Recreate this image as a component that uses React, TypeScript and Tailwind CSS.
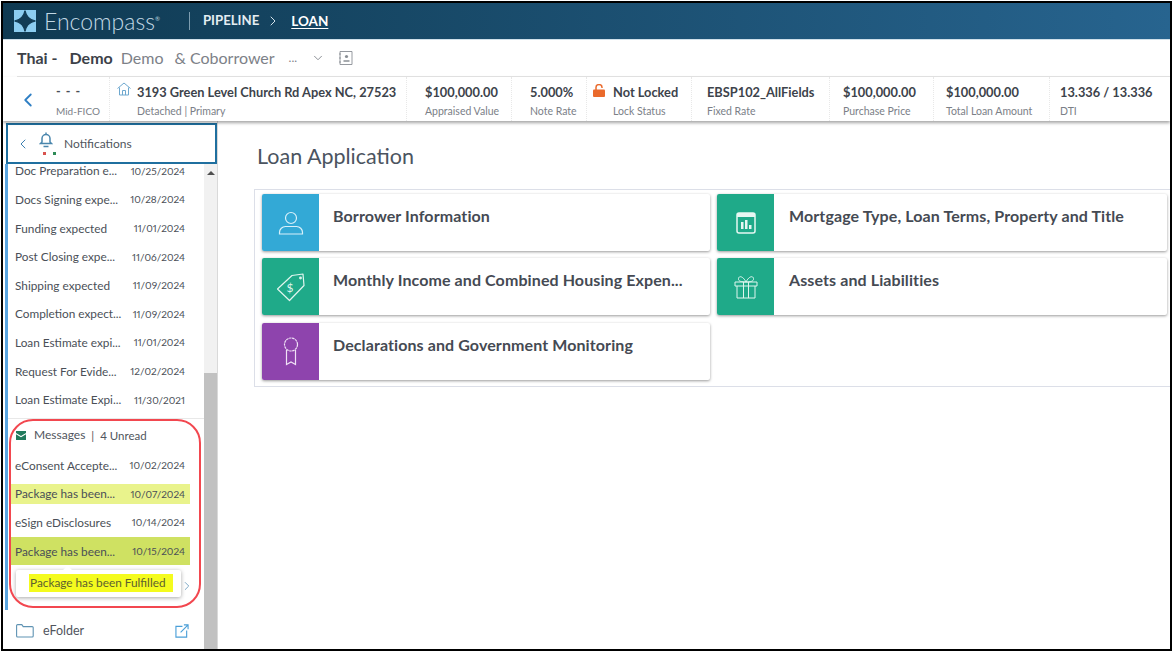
import { ChevronDown, ChevronLeft, ChevronRight } from "lucide-react";
import type { ReactNode } from "react";

const milestones = [
  { label: "Doc Preparation e...", date: "10/25/2024" },
  { label: "Docs Signing expe...", date: "10/28/2024" },
  { label: "Funding expected", date: "11/01/2024" },
  { label: "Post Closing expe...", date: "11/06/2024" },
  { label: "Shipping expected", date: "11/09/2024" },
  { label: "Completion expect...", date: "11/09/2024" },
  { label: "Loan Estimate expi...", date: "11/01/2024" },
  { label: "Request For Evide...", date: "12/02/2024" },
  { label: "Loan Estimate Expi...", date: "11/30/2021" },
];

const messages = [
  { label: "eConsent Accepte...", date: "10/02/2024", hl: "h-[28px]" },
  { label: "Package has been...", date: "10/07/2024", hl: "h-[20px] bg-[#e9f38c]" },
  { label: "eSign eDisclosures", date: "10/14/2024", hl: "h-[28px]" },
  { label: "Package has been...", date: "10/15/2024", hl: "h-[28px] bg-[#cfe162]" },
];

function Row({ label, date, hl = "h-[28px]" }: { label: string; date: string; hl?: string }) {
  return (
    <div className="h-[28.6px] flex items-center ml-[3px] w-[179px]">
      <div className={`${hl} w-full flex items-center justify-between pl-[4px] pr-[5px] text-[11.8px] text-[#4a4f57] whitespace-nowrap`}>
        <span>{label}</span>
        <span className="text-[10px] proportional-nums">{date}</span>
      </div>
    </div>
  );
}

function Stat({ width, pad, value, label, icon }: { width: string; pad: string; value: string; label: string; icon?: ReactNode }) {
  return (
    <div className={`${width} ${pad} h-full shrink-0 flex border-r border-dotted border-[#e8e8e8]`}>
      {icon}
      <div className="whitespace-nowrap">
        <div className="text-[12.8px] font-bold text-[#3d434b] leading-[16px] mt-[7px]">{value}</div>
        <div className="text-[10.5px] text-[#7b8087] leading-[14px] mt-[4px]">{label}</div>
      </div>
    </div>
  );
}

function Card({ color, title, icon, pad = "pl-[14px]" }: { color: string; title: string; icon: ReactNode; pad?: string }) {
  return (
    <div className="h-[57px] flex bg-white rounded-[2px] shadow-[0_1px_3px_rgba(0,0,0,0.4)] overflow-hidden">
      <div className={`${color} w-[57px] shrink-0 flex items-center justify-center`}>{icon}</div>
      <div className={`${pad} pt-[13px] text-[16px] tracking-[0.1px] font-bold leading-[18px] text-[#454a53] whitespace-nowrap`}>{title}</div>
    </div>
  );
}

export default function App() {
  return (
    <div className="w-[1175px] h-[654px] bg-white p-px font-['Lato','Liberation_Sans',sans-serif] overflow-hidden">
      <div className="w-[1171px] h-[650px] border-2 border-black flex flex-col overflow-hidden">
        {/* top bar */}
        <div className="h-[37px] shrink-0 flex items-center bg-gradient-to-r from-[#0f3a52] to-[#27648f] pl-[11px] border-b border-[#cfe0ea]">
          <svg width="22" height="22" viewBox="0 0 22 22">
            <rect width="22" height="22" fill="#8ccdf0" />
            <path d="M11 0.5 C12 6 16 10 21.5 11 C16 12 12 16 11 21.5 C10 16 6 12 0.5 11 C6 10 10 6 11 0.5Z" fill="#123c55" stroke="#123c55" strokeWidth="1.2" />
          </svg>
          <span className="ml-[8px] text-[23px] font-light text-[#c2d8e4] leading-none">Encompass</span>
          <span className="text-[6px] text-[#b9d2df] self-start mt-[11px]">®</span>
          <div className="ml-[29px] w-px h-[18px] bg-[#7d9db0]" />
          <span className="ml-[13px] text-[13.2px] font-bold text-[#e4edf2]">PIPELINE</span>
          <ChevronRight className="ml-[6px] w-[16px] h-[16px] text-[#d4e2ea]" strokeWidth={1.5} />
          <span className="ml-[10px] text-[13.5px] font-bold text-white underline underline-offset-2">LOAN</span>
        </div>

        {/* borrower name */}
        <div className="h-[37px] shrink-0 ml-[14px] flex items-center border-b border-[#e4e4e4] text-[16px] whitespace-nowrap">
          <span className="font-bold text-[#3c4148]">Thai -</span>
          <span className="ml-[12px] font-bold text-[#3c4148]">Demo</span>
          <span className="ml-[8px] text-[#7d8188]">Demo</span>
          <span className="ml-[11px] text-[#7d8188]">&amp; Coborrower</span>
          <span className="ml-[14px] text-[#7d8188] text-[12px]">...</span>
          <ChevronDown className="ml-[14px] w-[14px] h-[14px] text-[#7d8188]" strokeWidth={1.5} />
          <svg className="ml-[13px]" width="16" height="16" viewBox="0 0 16 16" fill="none" stroke="#8a8f95" strokeWidth="0.9">
            <path d="M2 1.5h12v13H2z M1 4h2 M1 8h2 M1 12h2" />
            <circle cx="8.5" cy="6.5" r="1.6" fill="#8a8f95" stroke="none" />
            <path d="M5.5 11h6" strokeWidth="1.5" />
          </svg>
        </div>

        {/* loan summary */}
        <div className="h-[44px] shrink-0 flex items-stretch relative z-20 bg-white shadow-[0_2px_3px_rgba(0,0,0,0.35)]">
          <div className="w-[107px] shrink-0 flex border-r border-dotted border-[#e8e8e8]">
            <ChevronLeft className="ml-[14px] mt-[12px] w-[22px] h-[22px] text-[#2f7fc4]" strokeWidth={2} />
            <div className="ml-[17px] whitespace-nowrap">
              <div className="text-[12.5px] font-bold text-[#4a4f57] leading-[16px] mt-[7px] tracking-[1px]">- - -</div>
              <div className="text-[10px] text-[#7b8087] leading-[14px] mt-[4px]">Mid-FICO</div>
            </div>
          </div>
          <Stat
            width="w-[297px]"
            pad="pl-[7px]"
            value="3193 Green Level Church Rd Apex NC, 27523"
            label="Detached | Primary"
            icon={
              <svg className="mt-[5px] mr-[6px]" width="14" height="14" viewBox="0 0 14 14" fill="none" stroke="#6ea8cf" strokeWidth="1">
                <path d="M0.5 6.5L7 1l6.5 5.5M2.5 5.5V13h9V5.5M5.5 13V8.5h3V13" />
              </svg>
            }
          />
          <Stat width="w-[105px]" pad="pl-[18px]" value="$100,000.00" label="Appraised Value" />
          <Stat width="w-[75px]" pad="pl-[18px]" value="5.000%" label="Note Rate" />
          <Stat
            width="w-[105px]"
            pad="pl-[6px]"
            value="Not Locked"
            label="Lock Status"
            icon={
              <svg className="mt-[7px] mr-[8px]" width="12" height="13" viewBox="0 0 12 13" fill="none">
                <path d="M3 6V3.2a3 2.6 0 0 1 6 0V4" stroke="#ea6a2c" strokeWidth="1.5" />
                <rect y="5.5" width="12" height="7.5" rx="1" fill="#ea6a2c" />
              </svg>
            }
          />
          <Stat width="w-[138px]" pad="pl-[15px]" value="EBSP102_AllFields" label="Fixed Rate" />
          <Stat width="w-[104px]" pad="pl-[13px]" value="$100,000.00" label="Purchase Price" />
          <Stat width="w-[116px]" pad="pl-[12px]" value="$100,000.00" label="Total Loan Amount" />
          <div className="pl-[10px] whitespace-nowrap">
            <div className="text-[12.8px] font-bold text-[#3d434b] leading-[16px] mt-[7px]">13.336 / 13.336</div>
            <div className="text-[10.5px] text-[#7b8087] leading-[14px] mt-[4px]">DTI</div>
          </div>
        </div>

        <div className="flex-1 flex min-h-0">
          {/* left panel */}
          <div className="w-[215px] shrink-0 flex flex-col border-r border-[#d9d9d9]">
            <div className="h-[41px] shrink-0 mt-[2px] ml-[3px] border-2 border-[#1f6f9f] flex items-center relative z-10 bg-white">
              <ChevronLeft className="ml-[7px] w-[16px] h-[16px] text-[#3b7fb0]" strokeWidth={1.5} />
              <div className="relative ml-[8px] w-[14px] h-[24px]">
                <svg width="14" height="16" viewBox="0 0 14 16" fill="none" stroke="#4a86ad" strokeWidth="1.5">
                  <path d="M7 0.5v2M3 10V6.5a4 4 0 0 1 8 0V10l1.5 1.5h-11zM4.5 14.5h5" />
                </svg>
                <div className="absolute left-[4px] top-[20px] w-[3px] h-[3px] bg-[#d9534f]" />
                <div className="absolute left-[14px] top-[20px] w-[3px] h-[3px] bg-[#2e8b57]" />
              </div>
              <span className="ml-[11px] text-[12px] text-[#50555d]">Notifications</span>
            </div>

            <div className="flex-1 flex min-h-0">
              <div className="w-[201px] flex flex-col pl-[2px]">
                <div className="h-[446px] shrink-0 border-l-[3px] border-[#5aa5e0] overflow-hidden relative">
                  <div className="-mt-[7px]">
                    {milestones.map((m) => (
                      <Row key={m.label + m.date} label={m.label} date={m.date} />
                    ))}
                  </div>
                  <div className="mt-[4px] border-t border-[#e8e8e8] relative">
                    {/* red annotation around the messages block */}
                    <div className="absolute left-[1px] top-0 w-[192px] h-[189px] rounded-[24px] border-2 border-[#f2474f] z-10" />
                    <div className="h-[32px] flex items-center pl-[8px] text-[11.5px] text-[#50555d] whitespace-nowrap">
                      <svg width="10" height="9" viewBox="0 0 10 9">
                        <path d="M0 0h10v2L5 5 0 2z M0 3.2L5 6.2 10 3.2V9H0z" fill="#217a5c" />
                      </svg>
                      <span className="ml-[8px] text-[12px]">Messages</span>
                      <span className="ml-[6px] mr-[6px] text-[#555]">|</span>
                      <span>4 Unread</span>
                    </div>
                    {messages.map((m) => (
                      <Row key={m.label + m.date} label={m.label} date={m.date} hl={m.hl} />
                    ))}
                    <div className="mt-[4px] flex items-center">
                      <div className="ml-[8px] w-[165px] h-[27px] bg-white rounded-[2px] shadow-[0_1px_4px_rgba(0,0,0,0.35)] relative flex items-center">
                        <div className="absolute -top-[3px] left-[48px] w-[7px] h-[7px] rotate-45 bg-white" />
                        <span className="relative ml-[13px] w-[144px] h-[18px] pl-[1px] flex items-center bg-[#f4fb1e] text-[11.8px] text-[#5c6030] whitespace-nowrap">
                          Package has been Fulfilled
                        </span>
                      </div>
                      <ChevronRight className="w-[14px] h-[14px] text-[#6d9dbd] mt-[6px] -ml-[1px]" strokeWidth={1.5} />
                    </div>
                  </div>
                </div>
                <div className="flex-1 flex items-center pt-[3px] pl-[11px] pr-[13px]">
                  <svg width="18" height="14" viewBox="0 0 18 14" fill="none" stroke="#5f93b3" strokeWidth="1.1">
                    <path d="M0.6 12V1.6a1 1 0 0 1 1-1h4.2l1.4 2h9a1 1 0 0 1 1 1V12a1 1 0 0 1-1 1H1.6a1 1 0 0 1-1-1z" />
                  </svg>
                  <span className="ml-[9px] text-[12.5px] text-[#50555d]">eFolder</span>
                  <svg className="ml-auto mr-[2px]" width="14" height="14" viewBox="0 0 15 15" fill="none" stroke="#4a9fd8" strokeWidth="1.2">
                    <path d="M8 2.5H1v11.5h11.5V7M6 9l8-8M9.5 1H14v4.5" />
                  </svg>
                </div>
              </div>
              <div className="w-[13px] bg-[#f1f1f1] flex flex-col items-center">
                <div className="mt-[7px] w-0 h-0 border-x-[4px] border-x-transparent border-b-[4px] border-b-[#505050]" />
                <div className="mt-[198px] w-full flex-1 bg-[#c1c1c1]" />
              </div>
            </div>
          </div>

          {/* loan application */}
          <div className="flex-1 min-w-0 pl-[36px]">
            <h1 className="mt-[23px] ml-[3px] text-[21.5px] leading-[24px] text-[#4b5460]">Loan Application</h1>
            <div className="mt-[21px] h-[198px] border-y border-l border-[#dcdfe8] pl-[7px] pt-[4px] grid grid-cols-[448px_450px] gap-x-[7px] gap-y-[7.3px] content-start">
              <Card
                color="bg-[#33a9d6]"
                title="Borrower Information"
                icon={
                  <svg width="26" height="26" viewBox="0 0 26 26" fill="none" stroke="#d8f0fa" strokeWidth="1.2">
                    <circle cx="13" cy="8" r="5.5" />
                    <path d="M1.5 24v-1.5a6 6 0 0 1 6-6h11a6 6 0 0 1 6 6V24z" />
                  </svg>
                }
              />
              <Card
                color="bg-[#1faa89]"
                pad="pl-[15px]"
                title="Mortgage Type, Loan Terms, Property and Title"
                icon={
                  <svg width="20" height="22" viewBox="0 0 20 22">
                    <rect x="1" y="1" width="18" height="20" rx="2" fill="none" stroke="#e6f7f2" strokeWidth="1.5" />
                    <rect x="1" y="1" width="18" height="4" fill="#e6f7f2" />
                    <path d="M5 10h2.5v7H5z M9 8h2.5v9H9z M13 13h2.5v4H13z" fill="#e6f7f2" />
                  </svg>
                }
              />
              <Card
                color="bg-[#1faa89]"
                title="Monthly Income and Combined Housing Expen..."
                icon={
                  <svg width="30" height="30" viewBox="0 0 30 30" fill="none" stroke="#dff5ee" strokeWidth="1.2">
                    <path d="M1.5 17L16 3.5l11-1.5 1 11.5L13.5 28.5z" strokeLinejoin="round" />
                    <circle cx="24.5" cy="6" r="0.8" fill="#dff5ee" />
                    <text x="10.5" y="20" fontSize="12" fill="#dff5ee" stroke="none" fontFamily="Lato">$</text>
                  </svg>
                }
              />
              <Card
                color="bg-[#1faa89]"
                pad="pl-[15px]"
                title="Assets and Liabilities"
                icon={
                  <svg width="24" height="24" viewBox="0 0 24 24" fill="none" stroke="#dff5ee" strokeWidth="1">
                    <path d="M1 7h22v4H1z M3 11v12h18V11 M9.5 7v16 M14.5 7v16" />
                    <path d="M12 7C9 1 5 0.5 4.5 3.5S8 7 12 7zM12 7c3-6 7-6.5 7.5-3.5S16 7 12 7z" />
                  </svg>
                }
              />
              <Card
                color="bg-[#8e44ad]"
                title="Declarations and Government Monitoring"
                icon={
                  <svg width="16" height="30" viewBox="0 0 16 30" fill="none" stroke="#f0e2f6" strokeWidth="1.2">
                    <circle cx="8" cy="8.5" r="6.5" strokeDasharray="2.5 0.6" />
                    <path d="M3.5 14v14.5L8 26l4.5 2.5V14" />
                  </svg>
                }
              />
            </div>
          </div>
        </div>
      </div>
    </div>
  );
}
